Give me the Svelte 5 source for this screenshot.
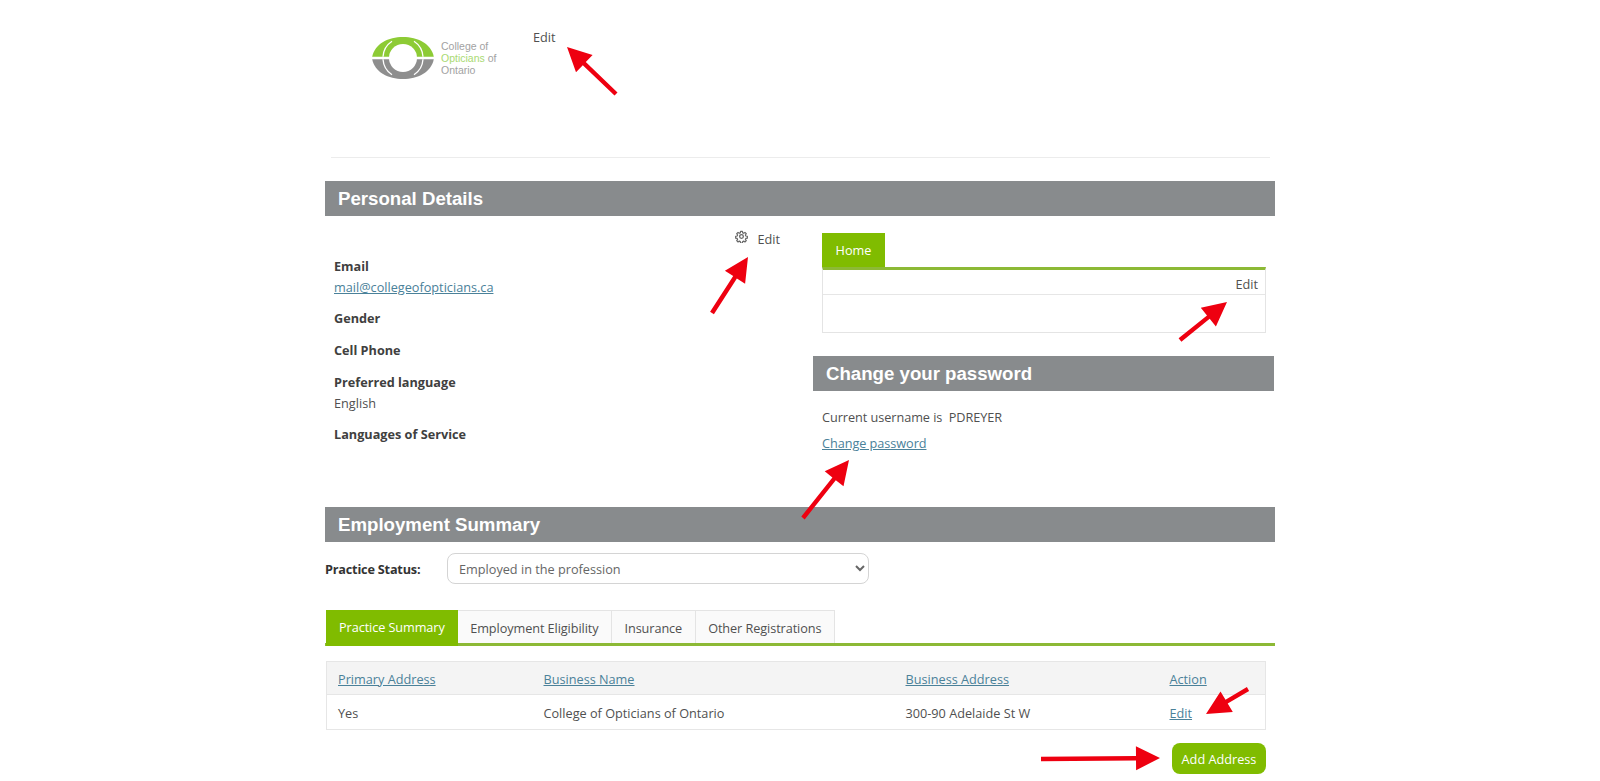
<script>
  const arrows = [
    [616, 94, 567, 47],
    [712, 313, 748, 257],
    [1180, 340, 1227, 302],
    [803, 518, 849, 460],
    [1248, 689, 1206, 714],
    [1041, 759, 1160, 758]
  ];
  function arrowPoints([x1, y1, x2, y2]) {
    const len = Math.hypot(x2 - x1, y2 - y1);
    const ux = (x2 - x1) / len, uy = (y2 - y1) / len;
    const nx = -uy, ny = ux;
    const headLen = 24, headHalf = 12, shaft = 2.2;
    const bx = x2 - ux * headLen, by = y2 - uy * headLen;
    const p = [
      [x1 + nx * shaft, y1 + ny * shaft],
      [bx + nx * shaft, by + ny * shaft],
      [bx + nx * headHalf, by + ny * headHalf],
      [x2, y2],
      [bx - nx * headHalf, by - ny * headHalf],
      [bx - nx * shaft, by - ny * shaft],
      [x1 - nx * shaft, y1 - ny * shaft]
    ];
    return p.map((q) => q.map((v) => v.toFixed(1)).join(',')).join(' ');
  }
  const rows = [
    { primary: 'Yes', name: 'College of Opticians of Ontario', address: '300-90 Adelaide St W' }
  ];
  const tabs = ['Practice Summary', 'Employment Eligibility', 'Insurance', 'Other Registrations'];
</script>

<div class="page">
  <div class="container">
    <header class="brand">
      <div class="logo">
        <svg class="eye" viewBox="0 0 64 44" width="64" height="44" aria-hidden="true">
          <defs>
            <clipPath id="top"><rect x="0" y="0" width="64" height="20.8" /></clipPath>
            <clipPath id="bot"><rect x="0" y="23.2" width="64" height="21" /></clipPath>
          </defs>
          <path clip-path="url(#top)" d="M1 22 C3 8 17 1 32 1 C47 1 61 8 63 22 Z" fill="#8dcb35" />
          <path clip-path="url(#bot)" d="M1 22 C3 36 17 43 32 43 C47 43 61 36 63 22 Z" fill="#8e8e8e" />
          <circle cx="32" cy="22" r="14" fill="#fff" />
          <path d="M12 20.8 A20 20 0 0 1 21 5.3 M52 20.8 A20 20 0 0 0 43 5.3 M12 23.2 A20 20 0 0 0 21 38.7 M52 23.2 A20 20 0 0 1 43 38.7" fill="none" stroke="#fff" stroke-width="1.3" />
        </svg>
        <div class="logo-text">College of<br /><span class="opt">Opticians</span> of<br />Ontario</div>
      </div>
      <span class="brand-edit">Edit</span>
    </header>
    <hr class="rule" />

    <h2 class="bar">Personal Details</h2>
    <div class="columns">
      <section class="left">
        <div class="gear-row">
          <svg class="gear" viewBox="0 0 24 24" width="13" height="13" aria-hidden="true">
            <circle cx="12" cy="12" r="3.4" fill="none" stroke="#666" stroke-width="2.4" />
            <path d="M10.3 2.5h3.4l.5 2.8 1.8.8 2.4-1.6 2.4 2.4-1.6 2.4.8 1.8 2.8.5v3.4l-2.8.5-.8 1.8 1.6 2.4-2.4 2.4-2.4-1.6-1.8.8-.5 2.8h-3.4l-.5-2.8-1.8-.8-2.4 1.6-2.4-2.4 1.6-2.4-.8-1.8-2.8-.5v-3.4l2.8-.5.8-1.8-1.6-2.4 2.4-2.4 2.4 1.6 1.8-.8z" fill="none" stroke="#666" stroke-width="2.2" stroke-linejoin="round" />
          </svg>
          <span>Edit</span>
        </div>
        <dl class="details">
          <dt>Email</dt>
          <dd><a href="#top">mail@collegeofopticians.ca</a></dd>
          <dt class="gender">Gender</dt>
          <dt class="cell">Cell Phone</dt>
          <dt>Preferred language</dt>
          <dd>English</dd>
          <dt>Languages of Service</dt>
        </dl>
      </section>
      <section class="right">
        <div class="home-panel">
          <div class="home-tabs"><span class="home-tab">Home</span></div>
          <div class="home-box">
            <div class="home-edit">Edit</div>
          </div>
        </div>
        <h2 class="bar pw">Change your password</h2>
        <div class="pw-body">
          <p class="username">Current username is&nbsp; PDREYER</p>
          <a href="#top">Change password</a>
        </div>
      </section>
    </div>

    <h2 class="bar emp">Employment Summary</h2>
    <div class="status">
      <label for="ps">Practice Status:</label>
      <select id="ps"><option>Employed in the profession</option></select>
    </div>

    <nav class="tabs">
      {#each tabs as t, i}
        <span class="tab" class:active={i === 0}>{t}</span>
      {/each}
    </nav>

    <table>
      <colgroup><col class="c1" /><col class="c2" /><col class="c3" /><col class="c4" /></colgroup>
      <thead>
        <tr>
          <th><a href="#top">Primary Address</a></th>
          <th><a href="#top">Business Name</a></th>
          <th><a href="#top">Business Address</a></th>
          <th><a href="#top">Action</a></th>
        </tr>
      </thead>
      <tbody>
        {#each rows as r}
          <tr>
            <td>{r.primary}</td>
            <td>{r.name}</td>
            <td>{r.address}</td>
            <td><a href="#top">Edit</a></td>
          </tr>
        {/each}
      </tbody>
    </table>
    <div class="actions"><button>Add Address</button></div>
  </div>

  <svg class="annotations" width="1600" height="781" aria-hidden="true">
    {#each arrows as a}
      <polygon points={arrowPoints(a)} fill="#ee0010" />
    {/each}
  </svg>
</div>

<style>
  :global(body) {
    margin: 0;
    background: #fff;
  }
  .page {
    position: relative;
    width: 1600px;
    height: 781px;
    overflow: hidden;
    font-family: "Open Sans", "Noto Sans", sans-serif;
    font-size: 12.7px;
    line-height: 21px;
    color: #505050;
  }
  .annotations {
    position: absolute;
    inset: 0;
    pointer-events: none;
  }
  .container {
    width: 950px;
    margin-left: 325px;
  }
  a {
    color: #4a8199;
    text-decoration: underline;
  }
  .brand {
    display: flex;
    align-items: flex-start;
    height: 157px;
    box-sizing: border-box;
    padding: 27px 0 0 46px;
  }
  .logo {
    display: flex;
    align-items: center;
    gap: 6px;
    margin-top: 9px;
    width: 162px;
  }
  .eye {
    flex: none;
  }
  .logo-text {
    font-family: "Liberation Sans", Arial, sans-serif;
    font-size: 10.5px;
    line-height: 11.7px;
    padding-top: 2px;
    color: #a2a2a2;
    white-space: nowrap;
  }
  .opt {
    color: #a9da72;
  }
  .rule {
    margin: 0 5px 0 6px;
    border: 0;
    border-top: 1px solid #ececec;
  }
  .bar {
    margin: 23px 0 0;
    height: 35px;
    box-sizing: border-box;
    padding-left: 13px;
    background: #888b8d;
    color: #fff;
    font-family: "Liberation Sans", Arial, sans-serif;
    font-weight: bold;
    font-size: 18.65px;
    line-height: 36px;
  }
  .columns {
    display: flex;
    height: 291px;
  }
  .left {
    width: 488px;
    box-sizing: border-box;
    padding: 13px 33px 0 9px;
  }
  .gear-row {
    display: flex;
    justify-content: flex-end;
    align-items: flex-start;
    gap: 9px;
    height: 27px;
  }
  .gear {
    margin-top: 1px;
  }
  .details {
    margin: 0;
  }
  .details dt {
    font-weight: 700;
    color: #404040;
    margin-top: 10.5px;
  }
  .details dt:first-child {
    margin-top: 0;
  }
  .details dt.gender {
    margin-top: 10px;
  }
  .details dt.cell {
    margin-top: 11px;
  }
  .details dd {
    margin: 0;
  }
  .right {
    width: 462px;
    padding-top: 16.5px;
  }
  .home-panel {
    margin: 0 9px;
    width: 444px;
  }
  .home-tabs {
    height: 34.5px;
    display: flex;
  }
  .home-tab {
    width: 63px;
    background: #80bc00;
    color: #fff;
    text-align: center;
    line-height: 35px;
  }
  .home-box {
    height: 66px;
    box-sizing: border-box;
    border: 1px solid #e4e4e4;
    border-top: 3px solid #8cb935;
  }
  .home-edit {
    height: 25px;
    box-sizing: border-box;
    border-bottom: 1px solid #e6e6e6;
    text-align: right;
    padding-right: 7px;
    line-height: 29px;
  }
  .bar.pw {
    margin-top: 23px;
    margin-right: 1px;
  }
  .pw-body {
    padding: 16px 9px 0;
    letter-spacing: -0.05px;
  }
  .username {
    margin: 0 0 5px;
  }
  .bar.emp {
    margin-top: 0;
  }
  .status {
    display: flex;
    align-items: center;
    margin-top: 11px;
    height: 31px;
  }
  .status label {
    width: 122px;
    font-weight: 700;
    color: #333;
    padding-top: 1px;
    letter-spacing: -0.2px;
  }
  select {
    width: 422px;
    height: 31px;
    box-sizing: border-box;
    border: 1px solid #d4d4d4;
    border-radius: 8px;
    background: #fff;
    color: #666;
    padding-left: 7px;
    font: inherit;
  }
  .tabs {
    display: flex;
    margin-top: 26px;
    height: 36px;
    box-sizing: border-box;
    border-bottom: 3px solid #8cb935;
    padding-left: 1px;
  }
  .tab {
    height: 33px;
    padding: 0 12.5px;
    background: #fafafa;
    border: 1px solid #e4e4e4;
    border-left: 0;
    border-bottom: 0;
    box-sizing: border-box;
    line-height: 35px;
    white-space: nowrap;
    letter-spacing: -0.08px;
  }
  .tab.active {
    height: 36px;
    padding: 0 13px;
    background: #80bc00;
    color: #fff;
    border: 0;
  }
  table {
    margin: 15px 0 0 1px;
    width: 939px;
    table-layout: fixed;
    border-collapse: collapse;
    border: 1px solid #e6e6e6;
  }
  .c1 { width: 206px; }
  .c2 { width: 362px; }
  .c3 { width: 264px; }
  .c4 { width: 107px; }
  th, td {
    padding: 2px 11px 0;
    box-sizing: border-box;
    font-weight: 400;
    text-align: left;
    height: 33px;
    border-bottom: 1px solid #e6e6e6;
  }
  td {
    height: 35px;
  }
  th {
    background: #f4f4f4;
  }
  .actions {
    display: flex;
    justify-content: flex-end;
    margin-top: 13px;
    padding-right: 9px;
  }
  button {
    width: 94px;
    height: 31px;
    border: 0;
    border-radius: 8px;
    background: #80bc00;
    color: #fff;
    padding: 1px 0 0;
    font: inherit;
  }
</style>
